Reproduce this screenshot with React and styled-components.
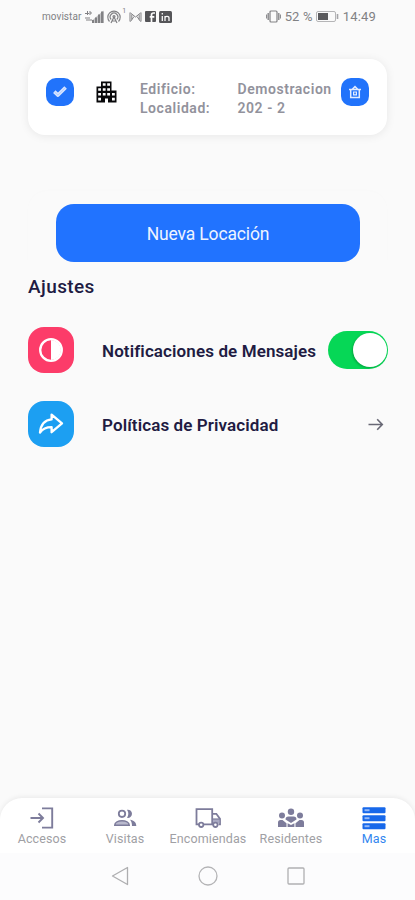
import React, { useState } from "react";
import styled, { createGlobalStyle } from "styled-components";

const GlobalStyle = createGlobalStyle`
  * { box-sizing: border-box; }
  body { margin: 0; background: #fafafa; font-family: Roboto, sans-serif; }
  button { font-family: inherit; border: 0; padding: 0; cursor: pointer; }
`;

const Screen = styled.div`
  width: 415px;
  height: 900px;
  display: flex;
  flex-direction: column;
  background: #fafafa;
  overflow: hidden;
`;

const StatusBar = styled.header`
  height: 33px;
  flex: none;
  padding: 0 39px 0 42px;
  display: flex;
  justify-content: space-between;
  align-items: center;
  color: #818184;
`;

const StatusGroup = styled.div`
  display: flex;
  align-items: center;
  gap: ${(p) => p.$gap}px;
  height: 16px;
  svg { display: block; flex: none; }
`;

const StatusText = styled.span`
  font-size: ${(p) => p.$size}px;
  letter-spacing: ${(p) => p.$spacing || 0}px;
  line-height: 16px;
  white-space: pre;
`;

const SmallMark = styled.span`
  align-self: flex-start;
  margin: -1px 0 0 -2px;
  font-size: 7px;
  line-height: 7px;
`;

const Content = styled.main`
  flex: 1;
  padding: 26px 28px 0 28px;
`;

const LocationCard = styled.section`
  height: 76px;
  border-radius: 17px;
  background: #fff;
  box-shadow: 0 1px 10px rgba(0, 0, 0, 0.08);
  display: flex;
  align-items: flex-start;
  padding: 18.5px 18px 0;
`;

const SmallButton = styled.button`
  width: 28px;
  height: 28px;
  flex: none;
  border-radius: 10px;
  background: #2173fb;
  color: #e2ecff;
  display: grid;
  place-items: center;
  svg { display: block; }
`;

const BuildingSlot = styled.span`
  flex: none;
  margin: 3.5px 23px 0 22px;
  color: #08080a;
  svg { display: block; }
`;

const Details = styled.dl`
  flex: 1;
  margin: 2.5px 0 0;
  display: grid;
  grid-template-columns: 97.5px auto;
  grid-auto-rows: 18.5px;
  font-size: 14px;
  font-weight: 600;
  line-height: 18.5px;
  letter-spacing: 0.55px;
  color: #92929c;
  white-space: nowrap;
  dt, dd { margin: 0; }
`;

const ActionArea = styled.section`
  margin-top: 56px;
  height: 72px;
  padding: 13px 0 0 28px;
  border-radius: 20px 20px 0 0;
  box-shadow: 0 -1px 3px rgba(0, 0, 0, 0.012);
`;

const PrimaryButton = styled.button`
  width: 304px;
  height: 58px;
  padding-top: 2px;
  border-radius: 18px;
  background: #2173ff;
  color: #eef4ff;
  font-size: 17.5px;
  letter-spacing: -0.15px;
`;

const SectionTitle = styled.h2`
  margin: 11px 0 0;
  height: 26px;
  font-size: 19px;
  line-height: 26px;
  font-weight: 500;
  letter-spacing: 0.4px;
  color: #211b42;
`;

const Settings = styled.div`
  margin: 27px -1px 0 0;
  display: grid;
  gap: 28px;
`;

const SettingRow = styled.div`
  height: 46px;
  display: flex;
  align-items: center;
`;

const Tile = styled.div`
  width: 46px;
  height: 46px;
  border-radius: 16px;
  background: ${(p) => p.$color};
  color: #fff;
  display: grid;
  place-items: center;
  margin-right: 28px;
  svg { display: block; }
`;

const SettingLabel = styled.span`
  flex: 1;
  font-size: 17px;
  line-height: 24px;
  font-weight: 600;
  letter-spacing: 0.11px;
  white-space: nowrap;
  color: #211b42;
  padding-top: 2px;
`;

const Switch = styled.button`
  width: 60px;
  height: 38px;
  flex: none;
  padding: 2px 1px;
  border-radius: 19px;
  background: ${(p) => (p.$on ? "#06d756" : "#c9c9ce")};
  display: flex;
  justify-content: ${(p) => (p.$on ? "flex-end" : "flex-start")};
`;

const Knob = styled.span`
  width: 34px;
  height: 34px;
  border-radius: 50%;
  background: #fff;
  box-shadow: -1px 1px 2px rgba(0, 60, 20, 0.3);
`;

const LinkButton = styled.button`
  background: none;
  color: #686875;
  margin-right: 4px;
  svg { display: block; }
`;

const TabBar = styled.nav`
  height: 55px;
  flex: none;
  display: grid;
  grid-template-columns: repeat(5, 83px);
  background: #fff;
  border-radius: 22px 22px 0 0;
  box-shadow: 0 -1px 5px rgba(0, 0, 0, 0.07);
`;

const Tab = styled.button`
  background: none;
  display: flex;
  flex-direction: column;
  align-items: center;
  padding-top: 7px;
  color: ${(p) => (p.$active ? "#1768ea" : "#7d7c9b")};
  svg { display: block; height: 26px; flex: none; }
`;

const TabLabel = styled.span`
  margin-left: 1px;
  font-size: 12.5px;
  line-height: 16px;
  letter-spacing: 0.12px;
  white-space: nowrap;
  color: ${(p) => (p.$active ? "#3286ef" : "#a0a0a4")};
`;

const SystemBar = styled.footer`
  height: 47px;
  flex: none;
  display: flex;
  align-items: center;
  justify-content: center;
  gap: 69px;
  padding: 0 0 1px 1px;
  background: #fcfcfd;
  svg { display: block; }
`;

const Signal = () => (
  <svg width="20" height="13" viewBox="0 0 20 13" fill="currentColor">
    <path d="M1 3.5h4M3.5 1v4M6 1v4M6 3h2M1 8h5M2 10h6" stroke="currentColor" fill="none" />
    <path d="M8 13V10.5L19.5.5V13z" opacity=".45" />
    <path d="M8 10h2v3H8zM11 7.5h2V13h-2zM14 4.5h2V13h-2zM17 1.5h2.5V13H17z" />
  </svg>
);

const Hotspot = () => (
  <svg width="14" height="14" viewBox="0 0 14 14" fill="none" stroke="currentColor" strokeWidth="1.2">
    <path d="M2.5 11.5a6.2 6.2 0 1 1 9 0M4.2 9.5a3.8 3.8 0 1 1 5.6 0M4 13l3-6 3 6M5 11h4" />
    <circle cx="7" cy="6.5" r="1" />
  </svg>
);

const Mail = () => (
  <svg width="13" height="12" viewBox="0 0 13 12" fill="none" stroke="currentColor">
    <path d="M1 1.5v9M12 1.5v9M1.5 2l5 4 5-4M1.5 10.5l3.5-5M11.5 10.5 8 5.5M2.8 3.5v5M10.2 3.5v5" />
  </svg>
);

const Facebook = () => (
  <svg width="11" height="11" viewBox="0 0 11 11">
    <rect width="11" height="11" rx="1" fill="#555558" />
    <path d="M6.5 11V4q0-2 2-2H10M4.7 5.8h4.6" fill="none" stroke="#fafafa" strokeWidth="1.7" />
  </svg>
);

const Linkedin = () => (
  <svg width="13" height="12" viewBox="0 0 13 12">
    <rect width="13" height="12" rx="1.5" fill="#555558" />
    <path d="M3.3 5v5M3.3 2v1.5M6 10V5M6 7q0-1.6 2-1.6t2 1.6v3" fill="none" stroke="#fafafa" strokeWidth="1.3" />
  </svg>
);

const Vibrate = () => (
  <svg width="15" height="13" viewBox="0 0 15 13" fill="none" stroke="currentColor">
    <rect x="4" y="1" width="7" height="11" rx="1" strokeWidth="1.2" />
    <path d="M2.2 3v7M12.8 3v7" strokeWidth="1.3" />
    <path d="M.6 4.5v4M14.4 4.5v4" />
  </svg>
);

const Battery = () => (
  <svg width="23" height="11" viewBox="0 0 23 11">
    <rect x=".5" y=".5" width="19" height="10" rx="1.5" fill="none" stroke="#b5b5b7" />
    <path d="M2 2h10v7H2z" fill="#5b5b5e" />
    <path d="M21.5 3v5" stroke="#a5a5a8" strokeWidth="1.6" />
  </svg>
);

const CheckIcon = () => (
  <svg width="16" height="13" viewBox="0 0 16 13" fill="none" strokeLinejoin="round">
    <path d="M2.3 6.7 6 10.1l7.6-7.6" stroke="#d6e4ff" strokeWidth="3.6" />
    <path d="M2.6 7 6 10.1l7.3-7.3" stroke="#a9c7ff" strokeWidth="0.8" />
  </svg>
);

const BuildingIcon = () => (
  <svg width="21" height="22" viewBox="0 0 21 22">
    <path d="M5 .5h10.5v9h5V21.5H12v-4H9v4H.5V5.5H5z" fill="currentColor" />
    <path
      d="M6.8 2.2h2.8v2.6H6.8zM11.2 2.2H14v2.6h-2.8zM2.2 7.2H5v2.6H2.2zM6.8 7.2h2.8v2.6H6.8zM11.2 7.2H14v2.6h-2.8zM2.2 12H5v2.6H2.2zM6.8 12h2.8v2.6H6.8zM11.2 12H14v2.6h-2.8zM16 12h2.8v2.6H16zM2.2 16.8H5v2.6H2.2zM16 16.8h2.8v2.6H16z"
      fill="#fff"
    />
  </svg>
);

const TrashIcon = () => (
  <svg width="14" height="14" viewBox="0 0 14 14" fill="none" stroke="currentColor" strokeWidth="1.5">
    <path d="M1 4.4h12M4.3 4.2 7 1.6l2.7 2.6M2.7 4.5v8h8.6v-8" />
    <path d="M5.6 7h2.8v2.8H5.6z" strokeWidth="1.2" />
  </svg>
);

const ContrastIcon = () => (
  <svg width="26" height="26" viewBox="0 0 26 26">
    <circle cx="13" cy="13" r="10.8" fill="none" stroke="#fff" strokeWidth="2.3" />
    <path d="M13 3a10 10 0 0 1 0 20z" fill="#fff" />
  </svg>
);

const ShareIcon = () => (
  <svg width="26" height="24" viewBox="0 0 26 24" fill="none" stroke="#fff" strokeWidth="2.3" strokeLinejoin="round">
    <path d="M13.6 7.4V2.6L24 11.4l-10.4 8.8v-5.1C8 15.1 4.600 16.700 2 20.500 2.700 13.700 6.200 8 13.600 7.400z" />
  </svg>
);

const ArrowIcon = () => (
  <svg width="16" height="13" viewBox="0 0 16 13" fill="none" stroke="currentColor" strokeWidth="1.6">
    <path d="M.5 6.5H14M9.2 1.2l5.1 5.3-5.1 5.3" />
  </svg>
);

const AccessIcon = () => (
  <svg width="24" viewBox="0 0 24 26" fill="none" stroke="currentColor" strokeWidth="1.9">
    <path d="M.5 13H13M8.5 8.5 13 13l-4.5 4.5M12 3.4h10.2v19.2H12" />
  </svg>
);

const VisitsIcon = () => (
  <svg width="24" viewBox="0 0 24 26" fill="currentColor">
    <circle cx="9" cy="8.8" r="3.2" fill="none" stroke="currentColor" strokeWidth="1.8" />
    <path d="M14 4.8a4.1 4.1 0 1 1 0 8q2.6-4 0-8z" />
    <path d="M1.8 20.3c0-3 3.6-4.5 7.2-4.5s7.2 1.5 7.2 4.5z" fill="#b9b9cd" stroke="currentColor" strokeWidth="1.6" />
    <path d="M17 14.8c3.8.7 6.3 2.5 6.3 6.3H19c0-2.6-.5-4.6-2-6.3z" />
  </svg>
);

const TruckIcon = () => (
  <svg width="26" viewBox="0 0 26 26" fill="none" stroke="currentColor" strokeWidth="1.8">
    <path d="M4 19.4H1.5V4.1h15.7v15.3H8M17.2 8.8h4.1l3.7 5.1v5.5h-1.5" />
    <path d="M18 14h6.500v4.500H18z" fill="#a9a9c2" stroke="none" />
    <path d="M17.5 14H25" strokeWidth="1.2" />
    <circle cx="6.2" cy="19.8" r="2.2" fill="#fff" />
    <circle cx="20.4" cy="19.8" r="2.2" fill="#fff" />
  </svg>
);

const ResidentsIcon = () => (
  <svg width="28" viewBox="0 0 28 26" fill="currentColor">
    <circle cx="14" cy="6.7" r="3.2" />
    <circle cx="5" cy="10.5" r="3" />
    <circle cx="23" cy="10.5" r="3" />
    <path d="M8.5 14.5q0-3 3-3h5q3 0 3 3L14 18z" />
    <path d="M1 22v-4.5Q1 15 3.5 15h2l4 3.2V22zM27 22v-4.5q0-2.500-2.500-2.500h-2l-4 3.200V22zM10.600 22v-3.800L14 20l3.400-1.800V22z" />
  </svg>
);

const MoreIcon = () => (
  <svg width="24" viewBox="0 0 24 26">
    {[2.2, 10.2, 18.2].map((y) => (
      <g key={y}>
        <rect x=".5" y={y} width="23" height="6" rx="1" fill="currentColor" />
        <rect x="2.5" y={y + 2} width="5" height="2" fill="#91b7f8" />
      </g>
    ))}
  </svg>
);

const tabs = [
  { label: "Accesos", icon: <AccessIcon /> },
  { label: "Visitas", icon: <VisitsIcon /> },
  { label: "Encomiendas", icon: <TruckIcon /> },
  { label: "Residentes", icon: <ResidentsIcon /> },
  { label: "Mas", icon: <MoreIcon /> },
];

export default function App() {
  const [notify, setNotify] = useState(true);
  const [active, setActive] = useState("Mas");

  return (
    <>
      <GlobalStyle />
      <Screen>
        <StatusBar>
          <StatusGroup $gap={3}>
            <StatusText $size={10} $spacing={0.05}>movistar</StatusText>
            <Signal />
            <Hotspot />
            <SmallMark>1</SmallMark>
            <Mail />
            <Facebook />
            <Linkedin />
          </StatusGroup>
          <StatusGroup $gap={3.5}>
            <Vibrate />
            <StatusText $size={13} $spacing={0.15}>52 %</StatusText>
            <Battery />
            <StatusText $size={13} $spacing={0.2}>14:49</StatusText>
          </StatusGroup>
        </StatusBar>

        <Content>
          <LocationCard>
            <SmallButton aria-label="Seleccionar"><CheckIcon /></SmallButton>
            <BuildingSlot><BuildingIcon /></BuildingSlot>
            <Details>
              <dt>Edificio:</dt>
              <dd>Demostracion</dd>
              <dt>Localidad:</dt>
              <dd>202 - 2</dd>
            </Details>
            <SmallButton aria-label="Eliminar"><TrashIcon /></SmallButton>
          </LocationCard>

          <ActionArea>
            <PrimaryButton>Nueva Locación</PrimaryButton>
          </ActionArea>

          <SectionTitle>Ajustes</SectionTitle>

          <Settings>
            <SettingRow>
              <Tile $color="#fc3c69"><ContrastIcon /></Tile>
              <SettingLabel>Notificaciones de Mensajes</SettingLabel>
              <Switch
                $on={notify}
                role="switch"
                aria-checked={notify}
                aria-label="Notificaciones de Mensajes"
                onClick={() => setNotify(!notify)}
              >
                <Knob />
              </Switch>
            </SettingRow>
            <SettingRow>
              <Tile $color="#1c9ff2"><ShareIcon /></Tile>
              <SettingLabel>Políticas de Privacidad</SettingLabel>
              <LinkButton aria-label="Abrir"><ArrowIcon /></LinkButton>
            </SettingRow>
          </Settings>
        </Content>

        <TabBar>
          {tabs.map(({ label, icon }) => (
            <Tab key={label} $active={active === label} onClick={() => setActive(label)}>
              {icon}
              <TabLabel $active={active === label}>{label}</TabLabel>
            </Tab>
          ))}
        </TabBar>

        <SystemBar>
          <svg width="18" height="20" viewBox="0 0 18 20" fill="none" stroke="#aeaeb0" strokeWidth="1.3">
            <path d="M16.5 1.5v17L1.5 10z" strokeLinejoin="round" />
          </svg>
          <svg width="20" height="20" viewBox="0 0 20 20" fill="none" stroke="#b4b4b6" strokeWidth="1.3">
            <circle cx="10" cy="10" r="9" />
          </svg>
          <svg width="18" height="18" viewBox="0 0 18 18" fill="none" stroke="#b0b0b2" strokeWidth="1.3">
            <rect x="1" y="1" width="16" height="16" rx="1" />
          </svg>
        </SystemBar>
      </Screen>
    </>
  );
}
